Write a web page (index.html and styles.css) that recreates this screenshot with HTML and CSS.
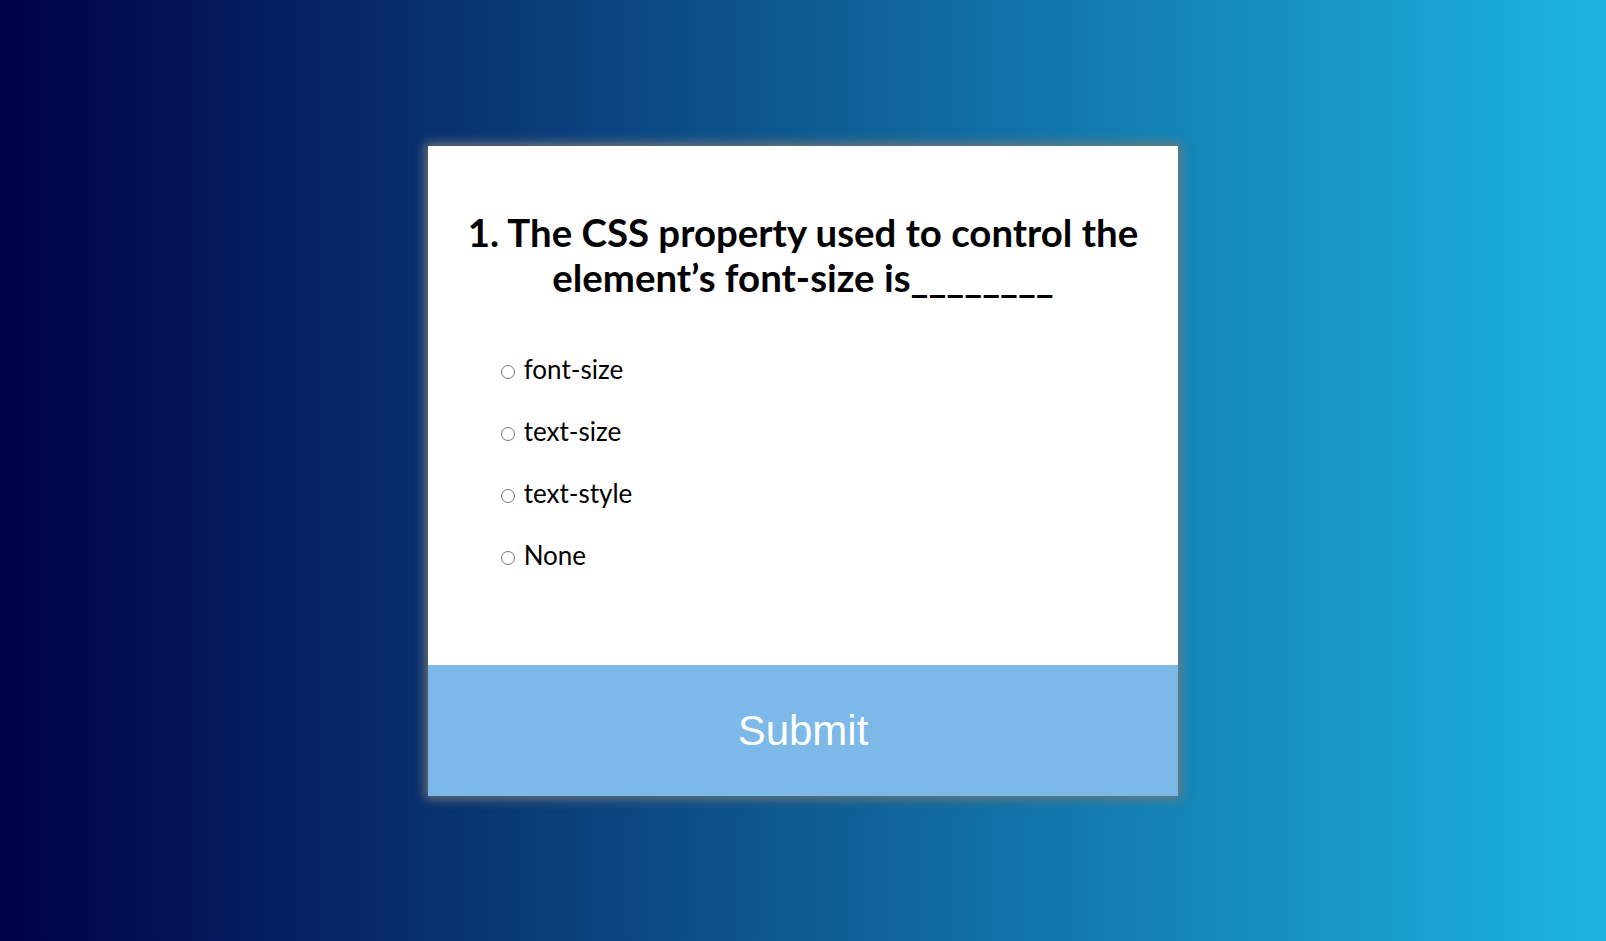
FILE: index.html
```html
<!DOCTYPE html>
<html lang="en">
<head>
<meta charset="UTF-8">
<title>Quiz</title>
<link rel="stylesheet" href="styles.css">
</head>
<body>
<div class="quiz-container">
  <div class="quiz-header">
    <h2 class="question">1. The CSS property used to control the element’s font-size is________</h2>
    <ul class="answers">
      <li><input type="radio" name="answer" id="a"> <label for="a">font-size</label></li>
      <li><input type="radio" name="answer" id="b"> <label for="b">text-size</label></li>
      <li><input type="radio" name="answer" id="c"> <label for="c">text-style</label></li>
      <li><input type="radio" name="answer" id="d"> <label for="d">None</label></li>
    </ul>
  </div>
  <button class="submit">Submit</button>
</div>
</body>
</html>
```

FILE: styles.css
```css
* { box-sizing: border-box; }
html, body { height: 100%; }
body {
  margin: 0;
  padding-top: 1px;
  font-family: Lato, "Noto Sans", sans-serif;
  background: linear-gradient(to right, #000046, #1cb5e0);
  display: flex;
  align-items: center;
  justify-content: center;
}
.quiz-container {
  background: #fff;
  width: 750px;
  box-shadow: 0 0 10px 3px rgba(120, 120, 120, 0.9);
  overflow: hidden;
}
.quiz-header {
  padding: 64px 32px;
}
.question {
  margin: 0;
  padding: 0;
  text-align: center;
  font-size: 38.4px;
  line-height: 45px;
  font-weight: 700;
  color: #000;
}
.answers {
  list-style: none;
  padding: 0 0 0 36px;
  margin: 54px 0 30px;
}
.answers li {
  font-size: 26px;
  line-height: 31px;
  margin: 0;
  color: #000;
}
.answers li + li { margin-top: 31px; }
.answers input {
  appearance: none;
  -webkit-appearance: none;
  display: inline-block;
  margin: 3px 2px 0 5px;
  width: 14px;
  height: 14px;
  border: 1px solid #767676;
  border-radius: 50%;
  background: #fff;
  vertical-align: baseline;
}
.submit {
  display: block;
  width: 100%;
  border: none;
  background: #7cb8e8;
  color: #fff;
  font-family: "Liberation Sans", Arial, sans-serif;
  font-size: 42px;
  height: 131px;
  padding: 0;
}
```
